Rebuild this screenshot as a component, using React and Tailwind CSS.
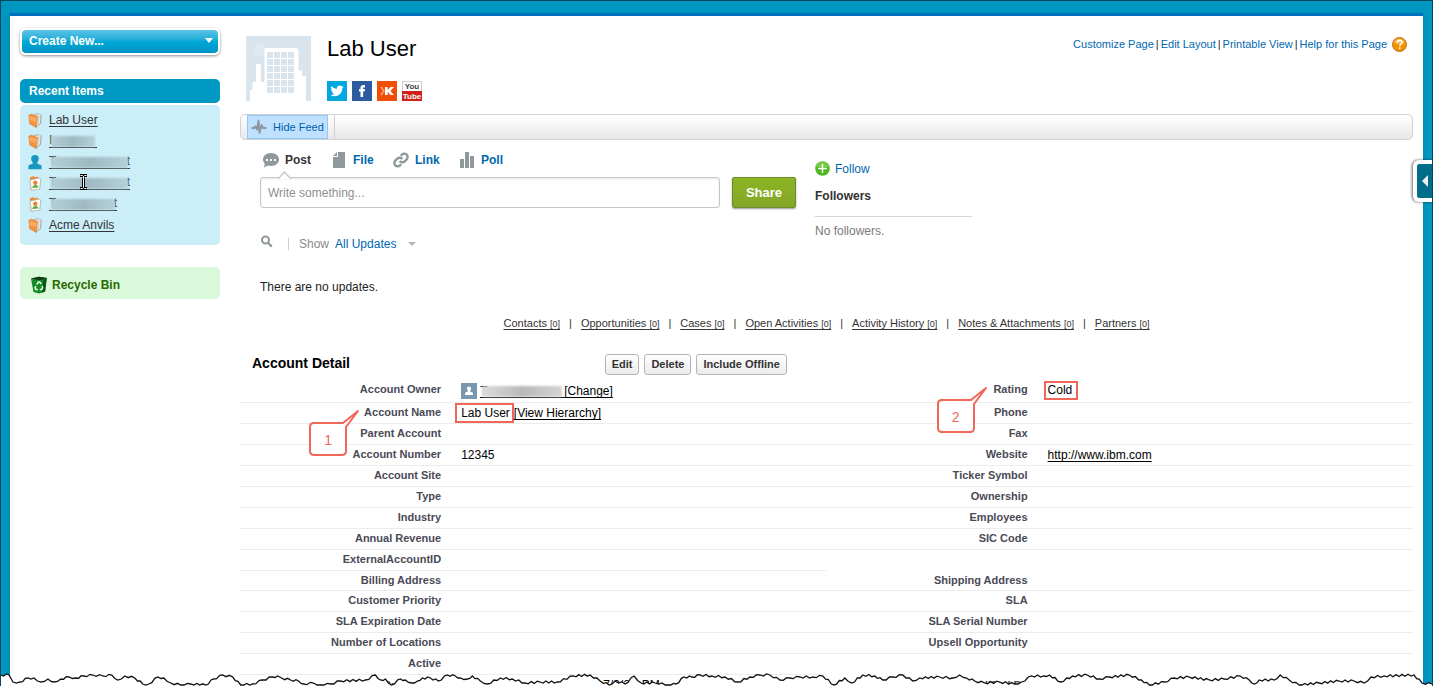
import React from "react";

const recent = [
  { icon: "folder", text: "Lab User" },
  { icon: "folder", first: "I", last: "", width: "w-12", label: "Hidden account" },
  { icon: "person", first: "T", last: "t", width: "w-[81px]", label: "Hidden user" },
  { icon: "contact", first: "T", last: "t", width: "w-[81px]", label: "Hidden contact", cursor: true },
  { icon: "contact", first: "T", last: "t", width: "w-[68px]", label: "Hidden contact" },
  { icon: "folder", text: "Acme Anvils" },
];

const related = ["Contacts", "Opportunities", "Cases", "Open Activities", "Activity History", "Notes & Attachments", "Partners"];

const rows = [
  ["Parent Account", "", "Fax", ""],
  ["Account Number", "12345", "Website", "http://www.ibm.com"],
  ["Account Site", "", "Ticker Symbol", ""],
  ["Type", "", "Ownership", ""],
  ["Industry", "", "Employees", ""],
  ["Annual Revenue", "", "SIC Code", ""],
  ["ExternalAccountID", "", "", ""],
  ["Billing Address", "", "Shipping Address", ""],
  ["Customer Priority", "", "SLA", ""],
  ["SLA Expiration Date", "", "SLA Serial Number", ""],
  ["Number of Locations", "", "Upsell Opportunity", ""],
  ["Active", "", "", ""],
];

const tear = [
  [0, 3], [8, 3], [12, 10], [19, 10], [27, 6], [33, 6], [40, 10], [47, 7], [53, 10], [60, 7], [68, 5], [75, 6], [83, 4], [92, 3], [102, 4], [111, 3], [117, 8], [124, 4], [134, 6], [142, 12], [148, 12], [157, 5], [163, 6], [170, 11], [180, 13], [190, 12], [205, 13], [213, 7], [222, 3], [232, 5], [240, 13], [252, 12], [262, 8], [272, 5], [277, 4], [281, 6], [290, 8], [298, 9], [303, 12], [313, 11], [320, 13], [330, 12], [340, 9], [365, 8], [375, 3], [380, 8], [385, 7], [391, 13], [400, 7], [405, 8], [411, 11], [417, 9], [422, 6], [430, 6], [438, 9], [447, 3], [455, 4], [460, 6], [467, 7], [472, 4], [480, 9],
  [487, 12], [500, 6], [512, 7], [525, 11], [540, 10], [557, 10], [573, 4], [590, 3], [600, 9], [609, 13], [615, 9], [625, 12], [634, 4], [641, 11], [655, 11], [662, 11], [668, 13], [676, 12], [684, 5], [692, 5], [700, 3], [712, 4], [725, 5], [738, 10], [750, 5], [760, 3], [770, 3], [780, 8], [790, 6], [800, 5], [813, 5], [823, 4], [834, 13], [845, 6], [852, 11], [863, 3], [875, 4], [883, 8], [893, 5], [903, 3], [913, 9], [920, 6], [940, 5], [953, 6],
  [960, 3], [967, 6], [975, 9], [985, 11], [1000, 10], [1015, 12], [1022, 10], [1032, 4], [1044, 4], [1050, 3], [1061, 10], [1073, 4], [1088, 3], [1100, 7], [1110, 5], [1130, 3], [1142, 8], [1150, 13], [1165, 10], [1175, 6], [1190, 5], [1210, 8], [1225, 7], [1241, 4], [1250, 8], [1255, 12], [1260, 8], [1275, 8], [1281, 3], [1290, 8], [1300, 13], [1320, 11], [1340, 9], [1355, 9], [1365, 11], [1372, 5], [1385, 4], [1415, 3], [1423, 11], [1433, 12],
];

// Fills the gaps between the main points with small notches.
function tearLine() {
  const out = [];
  tear.forEach(([x, y], i) => {
    out.push(`${x},${y}`);
    const next = tear[i + 1];
    if (!next) return;
    const n = Math.max(1, Math.round((next[0] - x) / 3));
    for (let k = 1; k < n; k++) {
      const t = k / n;
      const notch = k % 2 ? 1 : -1;
      out.push(`${x + (next[0] - x) * t},${Math.min(13, Math.max(2, y + (next[1] - y) * t + notch))}`);
    }
  });
  return out.join(" ");
}

function Tear() {
  const line = tearLine();
  return (
    <svg className="absolute inset-x-0 bottom-0 h-[14px] w-full" viewBox="0 0 1433 14" preserveAspectRatio="none" aria-hidden="true">
      <polygon points={`0,14 ${line} 1433,14`} fill="#fff" />
      <polyline points={line} fill="none" stroke="#111" strokeWidth="1.3" />
    </svg>
  );
}

function ItemIcon({ kind }) {
  if (kind === "person")
    return (
      <svg width="16" height="16" viewBox="0 0 16 16" className="shrink-0" aria-hidden="true">
        <path d="M8 1c2.400 0 3.800 1.400 3.800 3.500 0 1.600-.6 2.900-1.500 3.800v1.400l3 1c.9.3 1.300 1 1.300 1.900v2.600H1.400v-2.600c0-.9.400-1.600 1.300-1.900l3-1V8.300C4.800 7.400 4.200 6.100 4.200 4.500 4.200 2.400 5.600 1 8 1z" fill="#1797bf" />
      </svg>
    );
  if (kind === "contact")
    return (
      <svg width="16" height="16" viewBox="0 0 16 16" className="shrink-0" aria-hidden="true">
        <path d="M3 4.500 12 2.500 14 4 13.500 14 4.500 15.500 2.500 14z" fill="#d6d5cd" />
        <path d="M2.800 3.400 3.200 2 7 1.200l.9 1 3-.6.2 1.300-7.600 2z" fill="#f08a36" />
        <path d="M3 5.300 11.200 3.200 13.800 4 12.600 14.200 4.500 15.300z" fill="#fff" stroke="#a9a9a1" strokeWidth=".7" />
        <circle cx="8.300" cy="7.800" r="2.200" fill="#e8823a" />
        <path d="M5.300 13c0-2 1.300-3 3.100-3s3 .7 3 2.600z" fill="#63ad3c" />
      </svg>
    );
  return (
    <svg width="16" height="16" viewBox="0 0 16 16" className="shrink-0" aria-hidden="true">
      <path d="m7 2.300 4-1 3.800 1.500-.7 8.700L8.500 16z" fill="#aaa9a2" />
      <path d="m8 3 4-1 1.600.7-.6 8.500L9 14.500z" fill="#e9e9e6" />
      <path d="m11.500 3-.6 9" stroke="#aaa9a2" strokeWidth=".6" />
      <path d="M1.800 3.200 4.500 2.200 10.300 4.600 9.300 15.400 2.700 11.800z" fill="#f4933f" stroke="#dc7826" strokeWidth=".6" />
      <path d="m2.300 3.800 7.400 2.200-.4 4.500L2.700 8z" fill="#ffb36c" opacity=".7" />
    </svg>
  );
}

function Hidden({ first, last, width, label, dark, cursor }) {
  return (
    <a href="#" aria-label={label} className={`relative flex h-[14px] items-center justify-between border-b ${dark ? "border-black" : "border-[#333]"} ${width}`}>
      <span>{first}</span>
      <span>{last}</span>
      <span className={`absolute top-[2px] right-[2px] left-[2px] h-[11px] blur-[1px] ${dark ? "bg-linear-to-r from-[#dcdcdc] via-[#b9b9b9] to-[#d4d4d4]" : "bg-linear-to-r from-[#b4cfd8] via-[#9fb9c1] to-[#b4d0da]"}`} />
      {cursor && (
        <svg className="absolute -top-[2px] left-[30px]" width="9" height="16" viewBox="0 0 9 16" aria-hidden="true">
          <path d="M1 1.500h2.500l1 1 1-1H8M1 14.500h2.500l1-1 1 1H8M4.500 2.500v11" fill="none" stroke="#000" strokeWidth="3" />
          <path d="M1.500 1.500h2l1 1 1-1h2M1.500 14.500h2l1-1 1 1h2M4.500 2.500v11" fill="none" stroke="#fff" />
        </svg>
      )}
    </a>
  );
}

function Sidebar() {
  return (
    <aside className="w-[200px] shrink-0 pt-3">
      <button className="flex h-[27px] w-full items-center justify-between rounded-md border-2 border-white bg-linear-to-b from-[#58c4e6] via-[#00a8d6] to-[#0092c4] pr-1 pb-[2px] pl-[7px] font-bold text-white shadow-[0_1px_3px_rgba(0,0,0,0.45)]">
        Create New...
        <svg width="10" height="6" viewBox="0 0 10 6" aria-hidden="true"><path d="M1 0h8L5 5z" fill="#fff" /></svg>
      </button>
      <h2 className="mt-6 flex h-6 items-center rounded-[5px] bg-[#0099c4] pl-[9px] font-bold text-white">Recent Items</h2>
      <ul className="mt-[2px] rounded-[5px] bg-[#cceef9] pt-1 pb-[10px] pl-[7px] text-[#333]">
        {recent.map((r, i) => (
          <li key={i} className="flex h-[21px] items-center gap-[6px]">
            <ItemIcon kind={r.icon} />
            {r.text ? <a href="#" className="underline underline-offset-2">{r.text}</a> : <Hidden {...r} />}
          </li>
        ))}
      </ul>
      <a href="#" className="mt-[22px] flex h-8 items-center gap-1 rounded-[5px] bg-[#daf9da] pt-[3px] pl-[10px] font-bold text-[#286a00]">
        <svg width="18" height="18" viewBox="0 0 18 18" aria-hidden="true">
          <path d="M1 2.500 9 .8l8 1.200-1.800 13.500L9 17.500l-5.500-1.500z" fill="#168a25" />
          <path d="M1 2.500 9 .8l8 1.200-7 2.300z" fill="#13351a" />
          <path d="m13.500 3.500 3-1-1.500 13-3 1.300z" fill="#0a5315" />
          <path d="M6.800 8.500 8.400 6h1.400l1.400 2.200M12 10l.7 1.700-1 1.800H9.800M7.800 13.500H5.800l-.8-1.700.9-1.700" fill="none" stroke="#e6ffe6" strokeWidth="1.500" />
        </svg>
        Recycle Bin
      </a>
    </aside>
  );
}

function Header() {
  const links = ["Customize Page", "Edit Layout", "Printable View", "Help for this Page"];
  return (
    <header className="flex items-start pt-5 pl-[6px]">
      <svg width="65" height="65" viewBox="0 0 65 65" role="img" aria-label="Account">
        <rect width="65" height="65" fill="#d9e4ec" />
        <circle cx="14" cy="14" r="6" fill="#e1eaf0" />
        <path d="M4 65V54h2.500V46H10V28h5v18h3.500V13l1-1H51l1.500 2v20.500h3.500V40h4v25z" fill="#fff" />
        {[0, 1, 2, 3, 4, 5].map((r) => [0, 1, 2, 3].map((c) => <rect key={`${r}${c}`} x={21 + c * 7} y={16 + r * 7} width="6" height="6" fill="#d9e4ec" />))}
      </svg>
      <div className="ml-4">
        <h1 className="text-[22px] leading-[26px] text-black">Lab User</h1>
        <div className="mt-[19px] flex gap-[5px]">
          <a href="#" aria-label="Twitter">
            <svg width="20" height="20" viewBox="0 0 20 20"><rect width="20" height="20" fill="#00a8e0" /><path transform="translate(3.500 3.300) scale(.55)" d="M23.950 4.570a10 10 0 0 1-2.820.77 4.960 4.960 0 0 0 2.160-2.720c-.95.550-2 .95-3.130 1.180a4.920 4.920 0 0 0-8.380 4.480C7.690 8.090 4.070 6.130 1.640 3.160a4.820 4.820 0 0 0-.67 2.480c0 1.710.87 3.210 2.190 4.100a4.900 4.900 0 0 1-2.230-.62v.06a4.920 4.920 0 0 0 3.950 4.830 5 5 0 0 1-2.210.08 4.940 4.940 0 0 0 4.600 3.420A9.870 9.870 0 0 1 0 19.540a13.990 13.990 0 0 0 7.550 2.210c9.050 0 14-7.500 14-13.980 0-.21 0-.42-.02-.63a9.940 9.940 0 0 0 2.420-2.570z" fill="#fff" /></svg>
          </a>
          <a href="#" aria-label="Facebook">
            <svg width="20" height="20" viewBox="0 0 20 20"><rect width="20" height="20" fill="#2e5a9f" /><path d="M8.500 16V10.500H7V8h1.500V6.700C8.500 4.900 9.500 4 11.300 4H13v2.400h-1c-.7 0-.9.300-.9.900V8H13l-.3 2.500h-1.600V16z" fill="#fff" /></svg>
          </a>
          <a href="#" aria-label="Klout">
            <svg width="20" height="20" viewBox="0 0 20 20"><rect width="20" height="20" fill="#f04e05" /><path d="m4 6 3 4-3 4" fill="none" stroke="#ff9a63" strokeWidth="1.800" /><path d="M8 6h2.600v3L13.500 6H17l-3.600 3.900L17 14h-3.500l-2.900-3.200V14H8z" fill="#fff" /></svg>
          </a>
          <a href="#" aria-label="YouTube">
            <svg width="20" height="20" viewBox="0 0 20 20" fontFamily="'Liberation Sans Narrow','Liberation Sans',sans-serif" fontSize="8" fontWeight="bold" textAnchor="middle">
              <rect x=".5" y=".5" width="19" height="19" fill="#fff" stroke="#ccc" />
              <rect y="10" width="20" height="10" fill="#cf2118" />
              <text x="10" y="8" fill="#444">You</text>
              <text x="10" y="18" fill="#fff">Tube</text>
            </svg>
          </a>
        </div>
      </div>
      <nav className="ml-auto flex items-center pr-[6px] text-[11px] leading-4 text-[#0067b0]">
        {links.map((l, i) => (
          <React.Fragment key={l}>
            {i > 0 && <span className="px-[2px] text-[#222]">|</span>}
            <a href="#">{l}</a>
          </React.Fragment>
        ))}
        <svg className="ml-[5px]" width="15" height="15" viewBox="0 0 15 15" aria-hidden="true">
          <circle cx="7.500" cy="7.500" r="7" fill="#f39200" stroke="#bf7617" />
          <path d="M2 6a5.700 5.700 0 0 1 11 0c-3 1.500-8 1.500-11 0z" fill="#ffc060" opacity=".7" />
          <path d="M5.200 5.700c0-1.500 1-2.300 2.400-2.300s2.400.8 2.400 2c0 1.700-2.200 1.700-2.200 3.500M7.700 10.300v1.700" fill="none" stroke="#fff" strokeWidth="1.600" />
        </svg>
      </nav>
    </header>
  );
}

function Feed() {
  return (
    <section>
      <div className="mt-[13px] flex h-[26px] rounded-[5px] border border-[#d2d2d2] bg-linear-to-b from-white to-[#e8e8e8] pl-[6px]">
        <button className="flex h-6 items-center gap-[6px] border border-[#90c8fc] bg-[#c0e0ff] px-[3px] text-[11px] text-[#0060a8]">
          <svg width="16" height="16" viewBox="0 0 16 16" aria-hidden="true"><path d="M.5 9h2.500l1.500-1.500L6 10.500 7.500 1.500 8.500 14 10.500 6l1.500 3h3.500" fill="none" stroke="#8d979c" strokeWidth="2" strokeLinejoin="round" /></svg>
          Hide Feed
        </button>
        <span className="ml-[6px] border-l border-[#cfcfcf]" />
      </div>

      <div className="flex items-start pl-5">
        <div className="w-[460px]">
          <div className="flex h-[37px] items-center pt-[3px] pl-[3px] font-bold text-[#0067b0]">
            <button className="flex w-[70px] items-center gap-[6px] text-[#333]">
              <svg width="16" height="16" viewBox="0 0 16 16" aria-hidden="true"><path d="M8 1c4.600 0 8 2.900 8 6.500S12.600 14 8 14c-1 0-2-.1-2.900-.4L1 15.500l.8-3.700C.7 10.700 0 9.200 0 7.500 0 3.900 3.400 1 8 1z" fill="#8f989b" /><path d="M3 7h2v2H3zM7 7h2v2H7zM11 7h2v2h-2z" fill="#fff" /></svg>
              Post
            </button>
            <button className="flex w-[60px] items-center gap-2">
              <svg width="12" height="16" viewBox="0 0 12 16" aria-hidden="true"><path d="M5 0h7v16H0V5h5z" fill="#8f989b" /><path d="M0 4 4 0v4z" fill="#8f989b" /></svg>
              File
            </button>
            <button className="flex w-[67px] items-center gap-[6px]">
              <svg width="16" height="16" viewBox="0 0 24 24" fill="none" stroke="#8f989b" strokeWidth="3.600" aria-hidden="true"><path d="M10 13.500a5 5 0 0 0 7.500.5l3-3a5 5 0 0 0-7.100-7.100L11.700 5.600" /><path d="M14 10.500a5 5 0 0 0-7.500-.5l-3 3a5 5 0 0 0 7.100 7.100l1.700-1.700" /></svg>
              Link
            </button>
            <button className="flex items-center gap-[7px]">
              <svg width="14" height="16" viewBox="0 0 14 16" aria-hidden="true"><path d="M0 7h4v9H0zM5 0h4v16H5zM10 4h4v12h-4z" fill="#8f989b" /></svg>
              Poll
            </button>
          </div>
          <div className="relative">
            <input aria-label="Post" placeholder="Write something..." className="block h-[31px] w-full rounded-[3px] border border-[#c4c7c9] px-[7px] shadow-[inset_0_1px_2px_#e8e8e8] outline-none placeholder:text-[#8f8f8f]" />
            <svg className="absolute -top-[6px] left-[18px]" width="13" height="8" viewBox="0 0 13 8" aria-hidden="true"><path d="M0 8 6.500 1 13 8" fill="#fff" stroke="#c4c7c9" strokeWidth="1.300" /></svg>
          </div>
          <div className="mt-7 flex h-4 items-center text-[#8a8a8a]">
            <svg className="mb-[5px]" width="13" height="13" viewBox="0 0 13 13" aria-hidden="true"><circle cx="5.500" cy="5" r="3.500" fill="none" stroke="#8f989b" strokeWidth="2" /><path d="m8 7.800 3.800 3.800" stroke="#8f989b" strokeWidth="2.200" /></svg>
            <span className="ml-[15px] h-3 border-l border-[#d8cccc]" />
            <span className="ml-[10px]">Show</span>
            <button className="ml-[6px] flex items-center gap-3 text-[#0067b0]">
              All Updates
              <svg width="8" height="4" viewBox="0 0 8 4" aria-hidden="true"><path d="M0 0h8L4 4z" fill="#b5b5b5" /></svg>
            </button>
          </div>
          <p className="mt-7 text-[#222]">There are no updates.</p>
        </div>
        <button className="mt-[37px] ml-3 h-[31px] w-16 rounded-[2px] border border-[#6f8b2d] bg-linear-to-b from-[#8bb423] to-[#85a729] text-[13px] font-bold text-white shadow-[0_1px_2px_rgba(0,0,0,0.4)]">Share</button>
        <div className="mt-[21px] ml-[19px] w-[157px]">
          <button className="flex items-center gap-[5px] text-[#0067b0]">
            <svg width="15" height="15" viewBox="0 0 15 15" aria-hidden="true"><circle cx="7.500" cy="7.500" r="7.300" fill="#4fb81f" /><path d="M1 6a6.700 6.700 0 0 1 13 0z" fill="#8ad35f" opacity=".7" /><path d="M7.500 3v9M3 7.500h9" stroke="#fff" strokeWidth="1.500" /></svg>
            Follow
          </button>
          <h3 className="mt-[13px] border-b border-[#d6d6d6] pb-[13px] font-bold text-[#333]">Followers</h3>
          <p className="mt-[7px] text-[#7a7a7a]">No followers.</p>
        </div>
      </div>
    </section>
  );
}

function Callout({ n }) {
  return (
    <>
      <svg className="absolute top-0 left-0" width="52" height="48" viewBox="0 0 52 48" aria-hidden="true">
        <path d="M6 14h29L50 2 38 18v24q0 4-4 4H6q-4 0-4-4V18q0-4 4-4z" fill="#fff" stroke="#f1665a" strokeWidth="2" strokeLinejoin="round" />
      </svg>
      <span className="relative block w-[40px] pt-[23px] text-center text-[14px] leading-4 font-normal text-[#f1665a]">{n}</span>
    </>
  );
}

const label = "pr-[10px] text-right align-top text-[11px] font-bold text-[#4a4a56]";
const value = "pl-[10px] text-left align-top text-black";
const line = "border-b border-[#ececec]";

function Detail() {
  return (
    <section className="mt-[22px]">
      <div className="flex items-center">
        <h2 className="w-[31%] pb-[2px] pl-3 text-[14px] leading-5 font-bold text-black">Account Detail</h2>
        <div className="ml-px flex gap-[5px]">
          {["Edit", "Delete", "Include Offline"].map((b) => (
            <button key={b} className="h-[21px] rounded-[3px] border border-[#b5b5b5] bg-linear-to-b from-white to-[#ececec] px-[6px] pb-px text-[11px] font-bold text-[#333]">{b}</button>
          ))}
        </div>
      </div>
      <table className="mt-[5px] w-full table-fixed border-separate border-spacing-0 leading-4">
        <colgroup>
          <col className="w-[18%]" /><col className="w-[32%]" /><col className="w-[18%]" /><col className="w-[32%]" />
        </colgroup>
        <tbody>
          <tr className="h-[23px]">
            <th scope="row" className={`${label} ${line} pt-[1px]`}>Account Owner</th>
            <td className={`${value} ${line} pt-[3px]`}>
              <div className="flex items-center">
                <svg width="16" height="16" viewBox="0 0 16 16" className="mr-[3px]" aria-hidden="true"><rect width="16" height="16" fill="#7a97ae" /><path d="M8 3.500c1.300 0 2.100.9 2.100 2.100 0 1-.4 1.700-1 2.200v.7l2 .7c.6.2.9.6.9 1.200V12H4v-1.600c0-.6.300-1 .9-1.200l2-.7v-.7c-.6-.5-1-1.200-1-2.200 0-1.200.8-2.100 2.100-2.100z" fill="#fff" /></svg>
                <Hidden first="T" last="" width="w-[84px]" label="Hidden user" dark />
                <a href="#" className="underline underline-offset-2">[Change]</a>
              </div>
            </td>
            <th scope="row" className={`${label} ${line} relative pt-[1px]`}>
              <div className="absolute top-[6px] right-[50px] h-12 w-[52px]"><Callout n="2" /></div>
              Rating
            </th>
            <td className={`${value} ${line} pt-px`}>
              <span className="-ml-1 inline-block border-2 border-[#f1665a] pr-1 pl-[2px] leading-[15px]">Cold</span>
            </td>
          </tr>
          <tr className="h-[21px]">
            <th scope="row" className={`${label} ${line} relative pt-[1px]`}>
              <div className="absolute top-[6px] right-[91px] h-12 w-[52px]"><Callout n="1" /></div>
              Account Name
            </th>
            <td className={`${value} ${line}`}>
              <div className="-ml-[6px] flex h-5 items-center">
                <span className="border-2 border-[#f1665a] pr-[2px] pl-1">Lab User</span>
                <a href="#" className="underline underline-offset-2">[View Hierarchy]</a>
              </div>
            </td>
            <th scope="row" className={`${label} ${line} pt-[1px]`}>Phone</th>
            <td className={`${value} ${line}`} />
          </tr>
          {rows.map(([a, b, c, d]) => (
            <tr key={a} className={a === "Billing Address" ? "h-5" : "h-[21px]"}>
              <th scope="row" className={`${label} ${line} pt-[1px]`}>{a}</th>
              <td className={`${value} ${line} pt-[2px]`}>{b}</td>
              <th scope="row" className={c ? `${label} ${line} pt-[1px]` : label}>{c}</th>
              <td className={c ? `${value} ${line} pt-[2px]` : value}>{d && <a href="#" className="underline underline-offset-2">{d}</a>}</td>
            </tr>
          ))}
        </tbody>
      </table>
      <div className="grid h-[11px] grid-cols-[18%_32%_18%_32%] overflow-hidden pt-[2px] leading-4">
        <span className={label}>Created By</span>
        <span className="flex gap-3 pl-[152px] text-black"><span>7/3/2</span><span>PM</span></span>
        <span className={label}>Last Modified By</span>
      </div>
    </section>
  );
}

export default function App() {
  return (
    <div className="relative flex min-h-screen flex-col overflow-hidden border-x border-t border-[#00485e] bg-[#0097c0] px-[9px] pt-3 font-['Liberation_Sans',Arial,sans-serif] text-[12px] leading-[14px]">
      <div className="flex flex-1 gap-5 border-t-[3px] border-[#0070bd] bg-white px-[10px] shadow-[0_4px_6px_rgba(0,60,80,0.25)]">
        <Sidebar />
        <main className="min-w-0 flex-1">
          <Header />
          <Feed />
          <nav className="mt-[22px] flex justify-center text-[11px] text-[#333]">
            {related.map((r, i) => (
              <React.Fragment key={r}>
                {i > 0 && <span className="px-[9px]">|</span>}
                <a href="#" className="underline underline-offset-2">{r} <span className="text-[9px]">[0]</span></a>
              </React.Fragment>
            ))}
          </nav>
          <Detail />
        </main>
      </div>
      <button aria-label="Open sidebar" className="absolute top-[159px] -right-px flex h-[42px] w-5 items-center justify-center rounded-l-md border-y-4 border-l-4 border-white bg-[#006e8a] shadow-[-1px_0_3px_rgba(0,0,0,0.6)]">
        <svg className="shrink-0" width="8" height="14" viewBox="0 0 8 14" aria-hidden="true"><path d="M7 1v12L1 7z" fill="#eee" /></svg>
      </button>
      <Tear />
    </div>
  );
}
